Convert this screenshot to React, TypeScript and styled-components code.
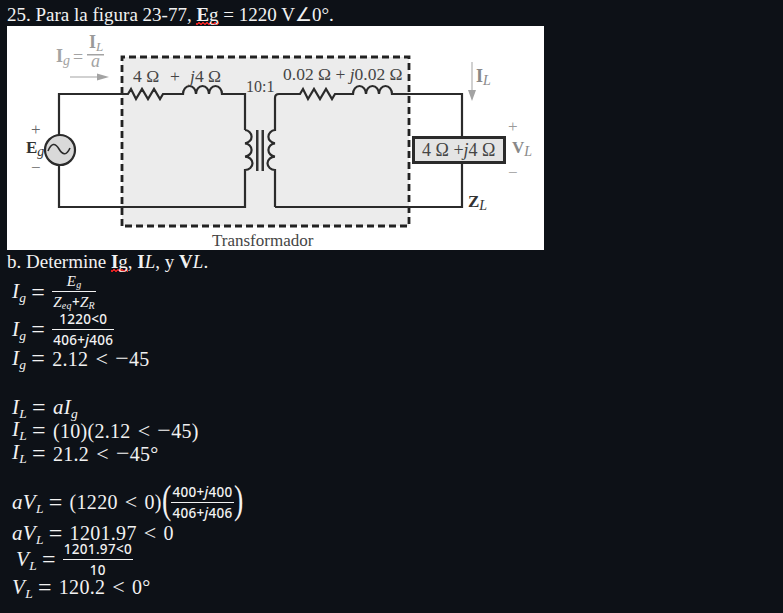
import styled, { createGlobalStyle } from 'styled-components';

const GlobalStyle = createGlobalStyle`
  html, body {
    margin: 0;
    padding: 0;
    background: #0d1117;
  }
`;

const Page = styled.div`
  width: 783px;
  height: 613px;
  overflow: hidden;
  background: #0d1117;
  color: #f2f2f2;
  font-family: 'Liberation Serif', serif;
`;

const TextLine = styled.div<{ $h: number; $top?: number }>`
  box-sizing: border-box;
  height: ${(p) => p.$h}px;
  padding: ${(p) => p.$top ?? 0}px 0 0 7px;
  font-size: 19px;
  line-height: ${(p) => p.$h - (p.$top ?? 0)}px;
  white-space: nowrap;
`;

// spell checker squiggle, text-decoration wavy came out too faint
const Squiggle = styled.span`
  background-image: linear-gradient(135deg, transparent 40%, #e02020 40% 60%, transparent 60%),
    linear-gradient(45deg, transparent 40%, #e02020 40% 60%, transparent 60%);
  background-size: 4px 3px;
  background-position: 0 100%, 2px 100%;
  background-repeat: repeat-x;
`;

const Figure = styled.svg`
  display: block;
  margin-left: 7px;
  width: 537px;
  height: 224px;
  background: #fff;
`;

const Label = styled.text<{ $size?: number; $color?: string; $bold?: boolean }>`
  font-family: 'Liberation Serif', serif;
  font-size: ${(p) => p.$size ?? 16}px;
  fill: ${(p) => p.$color ?? '#454545'};
  font-weight: ${(p) => (p.$bold ? 700 : 400)};
`;

const Wire = styled.path`
  fill: none;
  stroke: #2b2b2b;
  stroke-width: 2.2;
`;

const Equations = styled.div`
  display: flex;
  flex-direction: column;
`;

const Row = styled.div<{ $h: number; $indent?: number; $gap?: number }>`
  display: flex;
  align-items: center;
  height: ${(p) => p.$h}px;
  margin-top: ${(p) => p.$gap ?? 0}px;
  padding-left: ${(p) => p.$indent ?? 12}px;
  font-family: 'Liberation Serif', serif;
  font-size: 20px;
  line-height: 1;
  letter-spacing: 0.3px;
  white-space: nowrap;
`;

const Var = styled.i`
  font-size: 21px;
  line-height: 1;
`;

const Sub = styled.sub`
  font-size: 13.5px;
  line-height: 0;
  vertical-align: -4px;
`;

const Equals = styled.span`
  font-size: 24px;
  line-height: 1;
  margin: 0 7px 0 5px;
`;

const Op = styled.span`
  font-size: 22px;
  line-height: 1;
  margin: 0 7px;
`;

const Minus = styled.span`
  font-size: 24px;
  line-height: 1;
`;

const Fraction = styled.span`
  display: inline-flex;
  flex-direction: column;
  align-items: center;
  font-size: 13.5px;
  font-weight: 500;
  letter-spacing: 0.3px;
  font-family: 'Noto Sans', sans-serif;
`;

const Numerator = styled.span`
  display: block;
  padding: 0 1px 3px;
  line-height: 14px;
`;

const Denominator = styled.span`
  display: block;
  align-self: stretch;
  text-align: center;
  padding: 3px 1px 0;
  border-top: 1px solid #f2f2f2;
  line-height: 14px;
`;

const SmallVar = styled.i`
  font-family: 'Liberation Serif', serif;
  font-size: 15px;
`;

const SmallSub = styled.sub`
  font-size: 10px;
  line-height: 0;
  vertical-align: -2px;
`;

const Paren = styled.span`
  font-size: 40px;
  font-weight: 100;
  line-height: 1;
  transform: scaleX(0.7);
  margin: -4px -2px 0;
`;

const Circuit = () => (
  <Figure viewBox="7 26 537 224">
    <rect x="122" y="57" width="287" height="169" fill="#ececec" />
    <path d="M122 226V57H409V226Z" fill="none" stroke="#222" strokeWidth="2.8" strokeDasharray="7 4" />

    <Wire d="M59 135V94H128l3 -5 5 10 6 -10 6 10 6 -10 6 10 3 -5H183a6.5 8 0 0 1 13 0a6.5 8 0 0 1 13 0a6.5 8 0 0 1 13 0H245V130" />
    <Wire d="M245 130a7.5 6.7 0 0 1 0 13.3a7.5 6.7 0 0 1 0 13.3a7.5 6.7 0 0 1 0 13.4V207H59V165" />
    <Wire d="M275 207V170a7.5 6.7 0 0 1 0 -13.4a7.5 6.7 0 0 1 0 -13.3a7.5 6.7 0 0 1 0 -13.3V98q0 -4 4 -4H300l3 -5 5 10 6 -10 6 10 6 -10 6 10 3 -5H353a6.5 8 0 0 1 13 0a6.5 8 0 0 1 13 0a6.5 8 0 0 1 13 0H462V137" />
    <Wire d="M462 163V207H275" />
    <rect x="256" y="130" width="2.5" height="41" fill="#333" />
    <rect x="261.5" y="130" width="2.5" height="41" fill="#333" />

    <circle cx="60" cy="150" r="15" fill="#d9d9d9" stroke="#2b2b2b" strokeWidth="2.2" />
    <path d="M48 151q5 -12 11 -2t11 -1" fill="none" stroke="#2b2b2b" strokeWidth="1.6" />

    <rect x="413.5" y="137.5" width="91" height="25" fill="#e4e4e4" stroke="#2b2b2b" strokeWidth="3" />

    <path d="M70 77H98" stroke="#a3a3a3" strokeWidth="1" />
    <path d="M97 73.5L109 77L97 80.5Z" fill="#a3a3a3" />
    <path d="M472 62V92" stroke="#a3a3a3" strokeWidth="1" />
    <path d="M468 90L472 101L476 90Z" fill="#a3a3a3" />
    <rect x="87" y="54" width="17" height="1.5" fill="#a3a3a3" />

    <Label x="56" y="62" $size={18} $color="#a3a3a3" $bold>
      I<tspan fontSize="14" fontStyle="italic" fontWeight="400" dy="3">g</tspan>
    </Label>
    <Label x="73" y="63" $size={18} $color="#a3a3a3">=</Label>
    <Label x="89" y="48" $size={18} $color="#999" $bold>
      I<tspan fontSize="13" fontStyle="italic" fontWeight="400" dy="3">L</tspan>
    </Label>
    <Label x="91" y="67" $size={18} $color="#a3a3a3" fontStyle="italic">a</Label>

    <Label x="133" y="82" $size={17.5}>
      4 Ω<tspan x="170">+</tspan><tspan x="190" fontStyle="italic">j</tspan>4 Ω
    </Label>
    <Label x="246" y="92" $size={16}>10:1</Label>
    <Label x="283" y="80" $size={17.5}>0.02 Ω + <tspan fontStyle="italic">j</tspan>0.02 Ω</Label>
    <Label x="476" y="82" $size={18} $color="#888" $bold>
      I<tspan fontSize="14" fontStyle="italic" fontWeight="400" dy="3">L</tspan>
    </Label>
    <Label x="422" y="156" $size={18}>4 Ω +<tspan fontStyle="italic">j</tspan>4 Ω</Label>
    <Label x="31" y="135" $size={17} $color="#666">+</Label>
    <Label x="26" y="153" $size={17} $color="#333" $bold>
      E<tspan fontSize="14" fontStyle="italic" fontWeight="400" dy="3">g</tspan>
    </Label>
    <Label x="31" y="173" $size={17} $color="#666">−</Label>
    <Label x="508" y="132" $size={17} $color="#999">+</Label>
    <Label x="512" y="153" $size={17} $color="#888" $bold>
      V<tspan fontSize="14" fontStyle="italic" fontWeight="400" dy="3">L</tspan>
    </Label>
    <Label x="508" y="178" $size={17} $color="#999">−</Label>
    <Label x="468" y="207" $size={17} $color="#333" $bold>
      Z<tspan fontSize="14" fontStyle="italic" fontWeight="400" dy="3">L</tspan>
    </Label>
    <Label x="212" y="246" $size={17}>Transformador</Label>
  </Figure>
);

const App = () => (
  <Page>
    <GlobalStyle />
    <TextLine $h={26} $top={3}>
      25. Para la figura 23-77, <Squiggle><b>E</b>g</Squiggle> = 1220 V∠0°.
    </TextLine>
    <Circuit />
    <TextLine $h={24}>
      b. Determine <Squiggle><b>I</b>g</Squiggle>, <b>I</b><i>L</i>, y <b>V</b><i>L</i>.
    </TextLine>
    <Equations>
      <Row $h={35}>
        <Var>I<Sub>g</Sub></Var><Equals>=</Equals>
        <Fraction>
          <Numerator><SmallVar>E<SmallSub>g</SmallSub></SmallVar></Numerator>
          <Denominator><SmallVar>Z<SmallSub>eq</SmallSub></SmallVar>+<SmallVar>Z<SmallSub>R</SmallSub></SmallVar></Denominator>
        </Fraction>
      </Row>
      <Row $h={40}>
        <Var>I<Sub>g</Sub></Var><Equals>=</Equals>
        <Fraction>
          <Numerator>1220&lt;0</Numerator>
          <Denominator>406+<i>j</i>406</Denominator>
        </Fraction>
      </Row>
      <Row $h={18}>
        <Var>I<Sub>g</Sub></Var><Equals>=</Equals>
        <span>2.12<Op>&lt;</Op><Minus>−</Minus>45</span>
      </Row>
      <Row $h={22} $gap={29}>
        <Var>I<Sub>L</Sub></Var><Equals>=</Equals>
        <Var>aI<Sub>g</Sub></Var>
      </Row>
      <Row $h={23}>
        <Var>I<Sub>L</Sub></Var><Equals>=</Equals>
        <span>(10)(2.12<Op>&lt;</Op><Minus>−</Minus>45)</span>
      </Row>
      <Row $h={23}>
        <Var>I<Sub>L</Sub></Var><Equals>=</Equals>
        <span>21.2<Op>&lt;</Op><Minus>−</Minus>45°</span>
      </Row>
      <Row $h={40} $gap={18}>
        <Var>aV<Sub>L</Sub></Var><Equals>=</Equals>
        <span>(1220<Op>&lt;</Op>0)</span>
        <Paren>(</Paren>
        <Fraction>
          <Numerator>400+<i>j</i>400</Numerator>
          <Denominator>406+<i>j</i>406</Denominator>
        </Fraction>
        <Paren>)</Paren>
      </Row>
      <Row $h={22}>
        <Var>aV<Sub>L</Sub></Var><Equals>=</Equals>
        <span>1201.97<Op>&lt;</Op>0</span>
      </Row>
      <Row $h={30} $indent={16}>
        <Var>V<Sub>L</Sub></Var><Equals>=</Equals>
        <Fraction>
          <Numerator>1201.97&lt;0</Numerator>
          <Denominator>10</Denominator>
        </Fraction>
      </Row>
      <Row $h={26}>
        <Var>V<Sub>L</Sub></Var><Equals>=</Equals>
        <span>120.2<Op>&lt;</Op>0°</span>
      </Row>
    </Equations>
  </Page>
);

export default App;
